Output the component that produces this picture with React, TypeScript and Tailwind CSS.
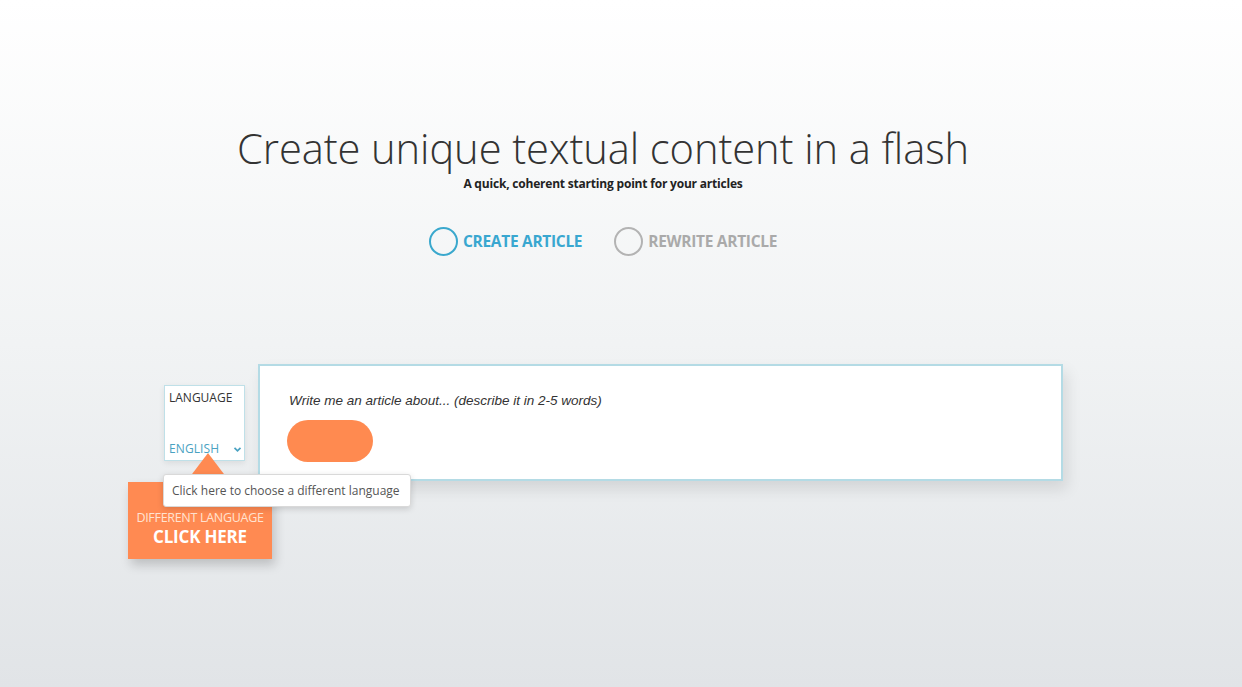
import React from "react";

export default function App() {
  return (
    <div
      className="relative w-full h-[687px] overflow-hidden bg-gradient-to-b from-[#ffffff] via-[#f1f3f4] to-[#e1e4e7]"
      style={{ fontFamily: '"Open Sans", "Noto Sans", sans-serif' }}
    >
      {/* heading */}
      <div className="flex flex-col items-center pt-[121px] pr-[36px]">
        <h1 className="text-[41.7px] font-light leading-[54px] text-[#333333] tracking-[-0.1px]">
          Create unique textual content in a flash
        </h1>
        <p className="text-[12px] font-bold leading-[16px] text-[#222222] tracking-[-0.2px] mt-[1px]">
          A quick, coherent starting point for your articles
        </p>

        <div className="flex items-center gap-[32px] mt-[35px]">
          <div className="flex items-center gap-[5px]">
            <span className="w-[29px] h-[29px] rounded-full border-2 border-[#3aa8cd]" />
            <span className="text-[15.5px] font-bold text-[#39a7d0] tracking-[-0.3px]">CREATE ARTICLE</span>
          </div>
          <div className="flex items-center gap-[5px]">
            <span className="w-[29px] h-[29px] rounded-full border-2 border-[#b3b3b3]" />
            <span className="text-[15.5px] font-bold text-[#aaaaaa] tracking-[-0.3px]">REWRITE ARTICLE</span>
          </div>
        </div>
      </div>

      {/* form row */}
      <div className="relative ml-[164px] mt-[108px] flex items-start gap-[13px] w-[899px]">
        <div className="mt-[21px] w-[81px] h-[76px] bg-white border border-[#bfe0e8] shadow-[0_2px_6px_rgba(0,0,0,0.08)] flex flex-col justify-between pl-[4px] pr-[2px] pt-[4px] pb-[3px]">
          <span className="text-[12px] leading-[16px] text-[#333333]">LANGUAGE</span>
          <div className="flex items-center justify-between">
            <span className="text-[12px] leading-[16px] text-[#4aa2c2] tracking-[0.1px]">ENGLISH</span>
            <svg width="9" height="7" viewBox="0 0 9 7">
              <path d="M1.5 1.8 L4.5 4.8 L7.5 1.8" fill="none" stroke="#4aa2c2" strokeWidth="1.7" />
            </svg>
          </div>
        </div>

        <div className="flex-1 h-[117px] bg-white border-2 border-[#b4dbe5] shadow-[4px_8px_14px_rgba(0,0,0,0.10)] pl-[29px] pt-[26px]">
          <p
            className="text-[13.5px] italic text-[#333333] leading-[18px]"
            style={{ fontFamily: '"Liberation Sans", Arial, sans-serif' }}
          >
            Write me an article about... (describe it in 2-5 words)
          </p>
          <button className="mt-[10px] -ml-[2px] w-[86px] h-[42px] rounded-full bg-[#ff8a50]" />
        </div>

        {/* orange callout */}
        <div className="absolute left-[-36px] top-[118px] w-[144px] h-[77px] bg-[#ff8a52] shadow-[3px_6px_10px_rgba(0,0,0,0.18)] flex flex-col items-center justify-end pb-[12px]">
          <div className="absolute left-[58px] top-[-29px] w-0 h-0 border-l-[22px] border-r-[22px] border-b-[29px] border-l-transparent border-r-transparent border-b-[#ff8a52]" />
          <span className="text-[12.5px] leading-[16px] text-[#ffe3d1] tracking-[-0.3px]">DIFFERENT LANGUAGE</span>
          <span className="text-[17px] leading-[21px] font-bold text-white tracking-[-0.2px]">CLICK HERE</span>
        </div>

        {/* tooltip */}
        <div className="absolute left-[-1px] top-[110px] w-[248px] h-[33px] bg-white border border-[#d9d9d9] rounded-[3px] shadow-[0_2px_6px_rgba(0,0,0,0.15)] flex items-center pl-[8px]">
          <span className="text-[12px] text-[#555555]">Click here to choose a different language</span>
        </div>
      </div>
    </div>
  );
}
